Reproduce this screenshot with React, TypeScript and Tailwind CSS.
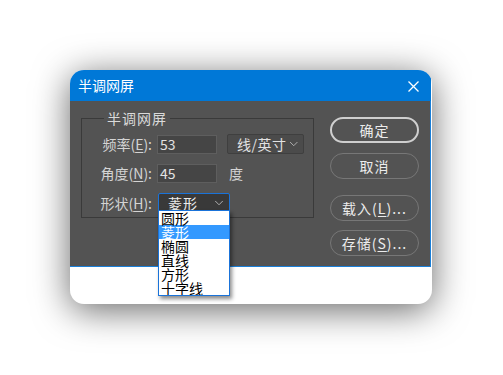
import { ChevronDown } from 'lucide-react';

const FONT = { fontFamily: '"Noto Sans CJK SC", "Noto Sans", sans-serif' };

const SHAPES = ['圆形', '菱形', '椭圆', '直线', '方形', '十字线'];

function Label({ text, mn }: { text: string; mn: string }) {
  return (
    <span className="w-[70px] shrink-0 whitespace-nowrap text-right text-[14px] leading-[19px] text-[#d4d4d4]">
      {text}(<span className="underline underline-offset-2">{mn}</span>):
    </span>
  );
}

function Button({ children, primary }: { children: React.ReactNode; primary?: boolean }) {
  return (
    <div
      className={
        'flex h-[26px] w-[89px] items-center justify-center whitespace-nowrap rounded-full text-[14px] tracking-[1px] text-[#ececec] ' +
        (primary ? 'border-2 border-[#cfcfcf]' : 'border border-[#777777]')
      }
    >
      {children}
    </div>
  );
}

export default function App() {
  return (
    <div className="min-h-screen bg-white pl-[70px] pt-[70px]" style={FONT}>
      <div className="relative h-[234px] w-[362px] overflow-hidden rounded-[14px] bg-white shadow-[0_6px_36px_rgba(0,0,0,0.6)]">
        {/* Title bar */}
        <div className="flex h-[31px] w-[361px] items-center justify-between bg-[#0078d7] pl-[8px] pr-[12px]">
          <span className="text-[14px] text-white">半调网屏</span>
          <svg width="11" height="11" viewBox="0 0 11 11" className="mt-[1px]">
            <path d="M0.5 0.5 L10.5 10.5 M10.5 0.5 L0.5 10.5" stroke="#ffffff" strokeWidth="1.3" />
          </svg>
        </div>

        {/* Body */}
        <div className="flex h-[166px] w-[361px] border-b border-r border-[#1a7fd8] bg-[#535353] pl-[11px] pt-[16px]">
          {/* Group box */}
          <div className="relative mt-[1px] h-[100px] w-[233px] border border-[#3a3a3a]">
            <span className="absolute left-[22px] top-[-11px] bg-[#535353] px-[3px] text-[14px] leading-[20px] tracking-[1px] text-[#dadada]">
              半调网屏
            </span>

            <div className="flex flex-col gap-[9px] pt-[15px]">
              <div className="flex items-center">
                <Label text="频率" mn="E" />
                <div className="ml-[5px] h-[19px] w-[60px] border border-[#5e5e5e] bg-[#454545] pl-[2px] text-[14px] leading-[17px] text-[#e2e2e2]">
                  53
                </div>
                <div className="ml-[10px] flex h-[20px] w-[77px] items-center justify-between whitespace-nowrap rounded-[2px] border border-[#3f3f3f] bg-[#4b4b4b] pl-[9px] pr-[3px] text-[14px] text-[#e2e2e2]">
                  <span className="tracking-[0.5px]">线/英寸</span>
                  <ChevronDown size={14} strokeWidth={1.4} className="text-[#c8c8c8]" />
                </div>
              </div>

              <div className="flex items-center">
                <Label text="角度" mn="N" />
                <div className="ml-[5px] h-[19px] w-[60px] border border-[#5e5e5e] bg-[#454545] pl-[2px] text-[14px] leading-[17px] text-[#e2e2e2]">
                  45
                </div>
                <span className="ml-[12px] text-[14px] text-[#d4d4d4]">度</span>
              </div>

              <div className="flex items-center">
                <Label text="形状" mn="H" />
                <div className="ml-[6px] flex h-[20px] w-[72px] items-center justify-between whitespace-nowrap rounded-[2px] border border-[#1a73d9] bg-[#393939] pl-[9px] pr-[3px] text-[14px] text-[#ececec]">
                  <span className="tracking-[1px]">菱形</span>
                  <ChevronDown size={14} strokeWidth={1.4} className="text-[#c8c8c8]" />
                </div>
              </div>
            </div>
          </div>

          {/* Buttons */}
          <div className="ml-[16px] flex flex-col">
            <Button primary>确定</Button>
            <div className="mt-[10px]">
              <Button>取消</Button>
            </div>
            <div className="mt-[16px]">
              <Button>
                载入(<span className="underline underline-offset-2">L</span>)...
              </Button>
            </div>
            <div className="mt-[9px]">
              <Button>
                存储(<span className="underline underline-offset-2">S</span>)...
              </Button>
            </div>
          </div>
        </div>

        {/* Open dropdown list */}
        <div className="absolute left-[88px] top-[140px] h-[86px] w-[72px] overflow-hidden border border-[#1a73d9] bg-white shadow-[2px_3px_4px_rgba(0,0,0,0.45)]">
          {SHAPES.map((s, i) => (
            <div
              key={s}
              className={
                'h-[14px] pl-[2px] text-[14px] leading-[14px] ' +
                (i === 1 ? 'bg-[#3399ff] text-white' : 'text-black')
              }
            >
              {s}
            </div>
          ))}
        </div>
      </div>
    </div>
  );
}
